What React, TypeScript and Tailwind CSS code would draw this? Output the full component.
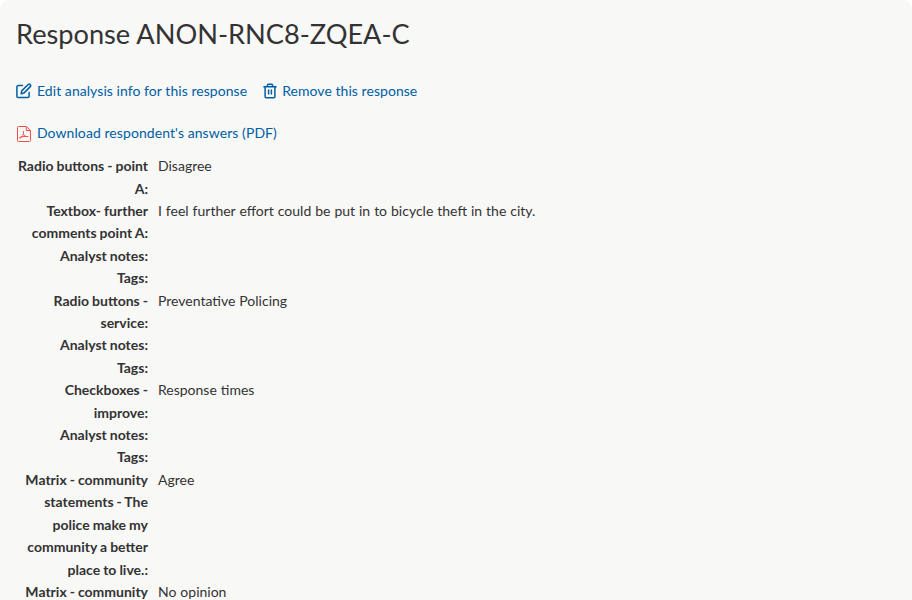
const answers = [
	{ label: "Radio buttons - point A:", value: "Disagree" },
	{
		label: "Textbox- further comments point A:",
		value: "I feel further effort could be put in to bicycle theft in the city.",
	},
	{ label: "Analyst notes:", value: "" },
	{ label: "Tags:", value: "" },
	{ label: "Radio buttons - service:", value: "Preventative Policing" },
	{ label: "Analyst notes:", value: "" },
	{ label: "Tags:", value: "" },
	{ label: "Checkboxes - improve:", value: "Response times" },
	{ label: "Analyst notes:", value: "" },
	{ label: "Tags:", value: "" },
	{
		label: "Matrix - community statements - The police make my community a better place to live.:",
		value: "Agree",
	},
	{ label: "Matrix - community", value: "No opinion" },
];

function EditIcon() {
	return (
		<svg
			className="h-4 w-4"
			viewBox="0 0 16 16"
			fill="none"
			stroke="currentColor"
			strokeWidth="1.5"
			strokeLinejoin="round"
			strokeLinecap="round"
		>
			<path d="M6.5 2.6H2.2C1.4 2.6.9 3.1.9 3.9v9.3c0 .8.5 1.3 1.3 1.3h9.6c.8 0 1.3-.5 1.3-1.3V9.5" />
			<path d="M5.2 10.8l.5-2.9 6.5-6.4c.5-.5 1.2-.5 1.7 0l.4.4c.5.5.5 1.2 0 1.7l-6.4 6.5z" />
		</svg>
	);
}

function TrashIcon() {
	return (
		<svg className="h-4 w-4" viewBox="0 0 16 16" fill="none" stroke="currentColor" strokeWidth="1.5">
			<path d="M1.4 3.7h13.2M5 3.5l1-2.2h4l1 2.2" />
			<path d="M3.1 3.7v9.9c0 .7.4 1.1 1.1 1.1h7.6c.7 0 1.1-.4 1.1-1.1V3.7M6.6 6.5v5M9.4 6.5v5" />
		</svg>
	);
}

function PdfIcon() {
	return (
		<svg
			className="h-4 w-4 text-[#f0504a]"
			viewBox="0 0 16 16"
			fill="none"
			stroke="currentColor"
			strokeLinejoin="round"
		>
			<path d="M2.5.5h7.8l4.2 4v10c0 .6-.4 1-1 1h-11c-.6 0-1-.4-1-1v-13c0-.6.4-1 1-1zM10.3.5v4h4.2" />
			<path d="M7.4 5v2.5c.4 1.6 1.4 2.5 2.5 3l2.4.1M7.5 7.5c-.2 1.2-.8 2.2-1.5 3.2-.8 1-1.6 1.7-2.3 1.4-.5-.6.8-1.3 2.3-1.4l3.9-.3" />
		</svg>
	);
}

export default function App() {
	return (
		<div className="h-[600px] overflow-hidden rounded-t-[10px] bg-[#f8f8f7] px-4 pt-[15px] font-['Lato',sans-serif] text-sm leading-[22.4px] text-[#333]">
			<h1 className="text-[27.2px] leading-[38px]">Response ANON-RNC8-ZQEA-C</h1>

			<div className="mt-[27px] flex gap-[15px] text-[#005ea5]">
				<a href="#" className="flex items-center gap-[5px] tracking-[0.055px]">
					<EditIcon />
					Edit analysis info for this response
				</a>
				<a href="#" className="flex items-center gap-1 tracking-[0.05px]">
					<TrashIcon />
					Remove this response
				</a>
			</div>
			<a href="#" className="mt-5 flex items-center gap-[5px] tracking-[0.075px] text-[#005ea5]">
				<PdfIcon />
				Download respondent's answers (PDF)
			</a>

			<dl className="mt-[10.4px]">
				{answers.map((answer, k) => (
					<div key={k} className="flex gap-[10px]">
						<dt className="w-[132px] shrink-0 text-right font-bold [word-spacing:-0.4px]">
							{answer.label}
						</dt>
						<dd className="[word-spacing:0.37px]">{answer.value}</dd>
					</div>
				))}
			</dl>
		</div>
	);
}
